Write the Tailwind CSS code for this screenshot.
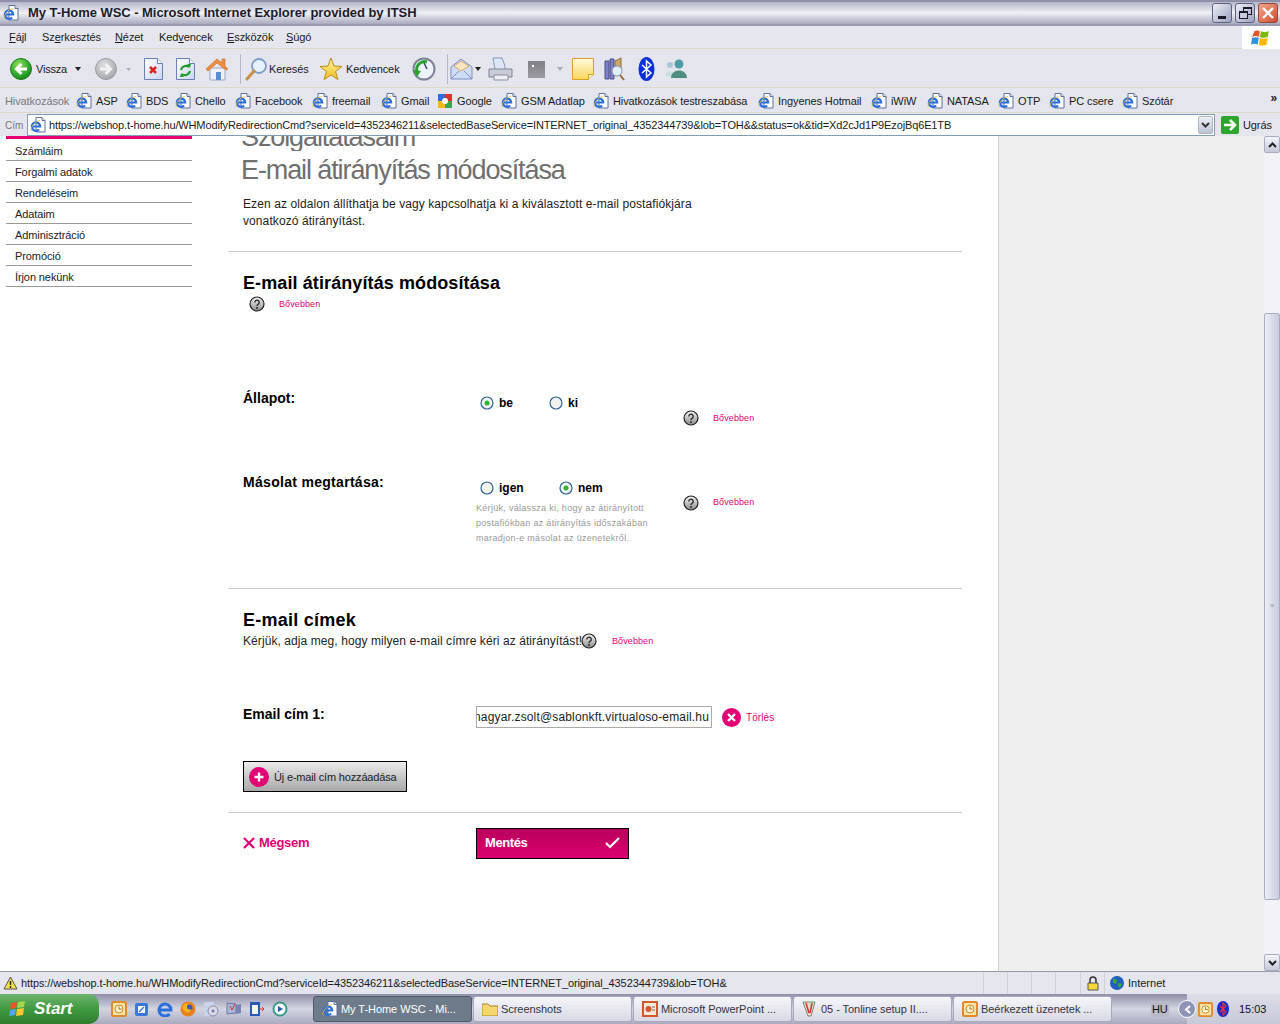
<!DOCTYPE html>
<html lang="hu">
<head>
  <meta charset="UTF-8">
  <title>My T-Home WSC - Microsoft Internet Explorer provided by ITSH</title>
  <script src="https://cdn.jsdelivr.net/npm/@tailwindcss/browser@4"></script>
</head>
<body class="w-[1280px] h-[1024px] overflow-hidden flex flex-col bg-white font-['Liberation_Sans',sans-serif] text-[12px] text-black">
  <svg class="absolute w-0 h-0">
    <defs>
      <linearGradient id="hg" x1="0" y1="0" x2="0" y2="1"><stop offset="0" stop-color="#f6f6f6"/><stop offset="1" stop-color="#8a8a8a"/></linearGradient>
      <radialGradient id="green" cx="0.4" cy="0.3" r="0.8"><stop offset="0" stop-color="#8fe05a"/><stop offset="0.6" stop-color="#2fa82f"/><stop offset="1" stop-color="#177a17"/></radialGradient>
      <radialGradient id="grey" cx="0.4" cy="0.3" r="0.8"><stop offset="0" stop-color="#dcdce0"/><stop offset="1" stop-color="#a2a3a8"/></radialGradient>
      <linearGradient id="star" x1="0" y1="0" x2="0" y2="1"><stop offset="0" stop-color="#fff6a8"/><stop offset="1" stop-color="#f3bd1c"/></linearGradient>
      <linearGradient id="note" x1="0" y1="0" x2="0" y2="1"><stop offset="0" stop-color="#fffbe0"/><stop offset="1" stop-color="#fbd75a"/></linearGradient>
      <linearGradient id="page" x1="0" y1="0" x2="1" y2="1"><stop offset="0" stop-color="#ffffff"/><stop offset="1" stop-color="#c9d6f2"/></linearGradient>
    </defs>
    <symbol id="ie" viewBox="0 0 16 16">
      <path d="M6 .5h6l3 3v11.500H6z" fill="#fff" stroke="#60709a"/>
      <path d="M12 .5v3h3" fill="#dfe6f6" stroke="#60709a"/>
      <path d="M1.800 9.500h8.400a4.200 4.200 0 1 0-1.100 3" fill="none" stroke="#2b6fdc" stroke-width="2.200"/>
      <path d="M1 14C.5 10 5 4 10 3.500" fill="none" stroke="#e8b93a" stroke-width=".8"/>
    </symbol>
    <symbol id="help" viewBox="0 0 16 16">
      <circle cx="8" cy="8" r="7" fill="url(#hg)" stroke="#222" stroke-width="1.200"/>
      <path d="M5.800 6.400a2.200 2.200 0 1 1 3.400 1.800c-.8.500-1.200.9-1.200 1.800" fill="none" stroke="#222" stroke-width="1.300"/>
      <circle cx="8" cy="12" r=".9" fill="#222"/>
    </symbol>
    <symbol id="radio" viewBox="0 0 14 14">
      <circle cx="7" cy="7" r="6" fill="#f2f2ee" stroke="#2f6496" stroke-width="1.200"/>
    </symbol>
    <symbol id="radio-on" viewBox="0 0 14 14">
      <circle cx="7" cy="7" r="6" fill="#f2f2ee" stroke="#2f6496" stroke-width="1.200"/>
      <circle cx="7" cy="7" r="2.500" fill="#2fb52f"/>
    </symbol>
    <symbol id="clock" viewBox="0 0 16 16">
      <rect x="1" y="1" width="14" height="14" rx="1.500" fill="#fbe4a8" stroke="#e08a2a" stroke-width="2"/>
      <circle cx="8" cy="8" r="4" fill="#fdf2d0" stroke="#c98a2a"/>
      <path d="M8 5.500V8h2.500" fill="none" stroke="#a8701e"/>
    </symbol>
  </svg>

  <!-- Title bar -->
  <div class="h-[26px] shrink-0 flex items-center pl-[3px] pr-[2px] border-t-2 border-b-2 border-t-[#8e8fa8] border-b-[#9b9cb4] bg-gradient-to-b from-[#b5b6c9] via-[#f0f0f5] to-[#a9aabf]">
    <svg class="w-[16px] h-[16px]"><use href="#ie"/></svg>
    <span class="ml-[9px] text-[13px] font-bold text-[#1c1c28] tracking-[-0.05px]">My T-Home WSC - Microsoft Internet Explorer provided by ITSH</span>
    <div class="ml-auto flex gap-[3px]">
      <div class="w-[20px] h-[20px] rounded-[3px] border border-[#5d6180] bg-gradient-to-br from-[#eceef6] to-[#9da2bf] flex items-end pl-[5px] pb-[3px]"><div class="w-[8px] h-[3px] bg-[#1c1c28]"></div></div>
      <div class="w-[20px] h-[20px] rounded-[3px] border border-[#5d6180] bg-gradient-to-br from-[#eceef6] to-[#9da2bf] relative">
        <div class="absolute left-[7px] top-[3px] w-[9px] h-[8px] border border-t-2 border-[#1c1c28]"></div>
        <div class="absolute left-[3px] top-[7px] w-[9px] h-[8px] border border-t-2 border-[#1c1c28] bg-[#c9cbdc]"></div>
      </div>
      <div class="w-[20px] h-[20px] rounded-[3px] border border-[#8c4a3a] bg-gradient-to-br from-[#f0a58e] to-[#d2492c] flex items-center justify-center">
        <svg class="w-[14px] h-[14px]" viewBox="0 0 14 14"><path d="M2 2l10 10M12 2L2 12" stroke="#fff" stroke-width="2.400"/></svg>
      </div>
    </div>
  </div>

  <!-- Menu bar -->
  <div class="h-[23px] shrink-0 flex items-center bg-[#e5e6ee] border-b border-b-[#dcd8c8] relative">
    <div class="flex items-center text-[11px] text-[#1a1a1a] tracking-[-0.1px]">
      <span class="ml-[9px] w-[33px]"><u>F</u>ájl</span>
      <span class="w-[58px] whitespace-nowrap">Sz<u>e</u>rkesztés</span>
      <span class="ml-[15px] w-[44px]"><u>N</u>ézet</span>
      <span class="w-[68px]">Ked<u>v</u>encek</span>
      <span class="w-[59px]"><u>E</u>szközök</span>
      <span><u>S</u>úgó</span>
    </div>
    <div class="absolute right-0 top-0 w-[38px] h-[23px] bg-white flex items-center justify-center">
      <svg class="w-[20px] h-[20px]" viewBox="0 0 18 18">
        <path d="M3 3c2-1 3-1 5 0l-1 5c-2-1-4-1-6 0z" fill="#e8562a"/><path d="M9 3c2 1 4 1 7 0l-1 5c-3 1-5 1-7 0z" fill="#7ab800"/>
        <path d="M1 9c2-1 4-1 6 0l-1 6c-2-1-4-1-6 0z" fill="#2f8fe0"/><path d="M8 9c2 1 4 1 7 0l-1 6c-3 1-5 1-7 0z" fill="#f6b900"/>
      </svg>
    </div>
  </div>

  <!-- Standard buttons -->
  <div class="h-[39px] shrink-0 flex items-center pt-[2px] bg-[#e4e5ed] border-b border-b-[#dcd8c8] text-[11px] text-[#1a1a1a]">
    <svg class="ml-[10px] w-[22px] h-[22px]" viewBox="0 0 22 22"><circle cx="11" cy="11" r="10.500" fill="url(#green)" stroke="#1d7d1d"/><path d="M17 11H7M11.500 6l-5 5 5 5" fill="none" stroke="#fff" stroke-width="3"/></svg>
    <span class="ml-[4px] w-[39px] tracking-[-0.2px]">Vissza</span>
    <svg class="w-[6px] h-[4px]" viewBox="0 0 6 4"><path d="M0 0h6L3 4z" fill="#222"/></svg>
    <svg class="ml-[14px] w-[22px] h-[22px]" viewBox="0 0 22 22"><circle cx="11" cy="11" r="10.500" fill="url(#grey)" stroke="#9a9ba0"/><path d="M5 11h10M10.500 6l5 5-5 5" fill="none" stroke="#f2f2f2" stroke-width="3"/></svg>
    <svg class="ml-[9px] w-[5px] h-[3px]" viewBox="0 0 6 4"><path d="M0 0h6L3 4z" fill="#a8a8ae"/></svg>
    <svg class="ml-[13px] w-[19px] h-[22px]" viewBox="0 0 19 22"><path d="M.5.500h13l5 5v16H.500z" fill="url(#page)" stroke="#6d80b5"/><path d="M13.500.5v5h5" fill="#fff" stroke="#6d80b5"/><path d="M6 9l6 6M12 9l-6 6" stroke="#e0261c" stroke-width="2.600"/></svg>
    <svg class="ml-[13px] w-[19px] h-[22px]" viewBox="0 0 19 22"><path d="M.5.500h13l5 5v16H.500z" fill="url(#page)" stroke="#6d80b5"/><path d="M13.500.5v5h5" fill="#fff" stroke="#6d80b5"/><path d="M5 12a5 5 0 0 1 8-3M14 13a5 5 0 0 1-8 3" fill="none" stroke="#1f9c2f" stroke-width="2.200"/><path d="M11 6l4 0-1 4zM8 19l-4 0 1-4z" fill="#1f9c2f"/></svg>
    <svg class="ml-[10px] w-[24px] h-[24px]" viewBox="0 0 24 24"><path d="M5 11h15v12H5z" fill="#eef1f8" stroke="#9aa6c4"/><path d="M1 12L12 2l5 4V2h3v7l3 3-2 1L12 6 3 14z" fill="#ef8f3e" stroke="#d0702a" stroke-width=".7"/><path d="M11 15h5v8h-5z" fill="#5a8ed0"/></svg>
    <div class="ml-[11px] w-[1px] h-[30px] bg-[#b5b7c6]"></div>
    <svg class="ml-[4px] w-[22px] h-[24px]" viewBox="0 0 22 24"><circle cx="14" cy="9" r="7" fill="#e6f2fd" stroke="#7d9cc6" stroke-width="1.800"/><path d="M9 14l-7 8" stroke="#c8924a" stroke-width="3" stroke-linecap="round"/></svg>
    <span class="ml-[2px] w-[50px] tracking-[-0.1px]">Keresés</span>
    <svg class="w-[24px] h-[24px]" viewBox="0 0 24 24"><path d="M12 1l3 8 8 .5-6.500 5 2.500 8L12 18l-7 4.500 2.500-8L1 9.500 9 9z" fill="url(#star)" stroke="#b98d16"/></svg>
    <span class="ml-[3px] w-[66px] tracking-[-0.1px]">Kedvencek</span>
    <svg class="w-[24px] h-[24px]" viewBox="0 0 24 24"><circle cx="12" cy="12" r="10.500" fill="#eef3fa" stroke="#7d8296" stroke-width="2"/><path d="M12 6l3 6" fill="none" stroke="#3a4a6a" stroke-width="1.500"/><path d="M5 15A8 8 0 0 1 15 5" fill="none" stroke="#2ca02c" stroke-width="3"/><path d="M1 13l8 1-4 6z" fill="#2ca02c"/></svg>
    <div class="ml-[11px] w-[1px] h-[30px] bg-[#b5b7c6]"></div>
    <svg class="ml-[2px] w-[23px] h-[24px]" viewBox="0 0 23 24"><path d="M1 10L11 2l11 8v12H1z" fill="#cfdcf6" stroke="#7d8fc4"/><path d="M4 9l7-5 8 5-8 5z" fill="#fbe6c0" stroke="#d8a86a"/><path d="M1 22l8-8M22 22l-8-8" stroke="#7d8fc4"/></svg>
    <svg class="ml-[2px] w-[6px] h-[4px]" viewBox="0 0 6 4"><path d="M0 0h6L3 4z" fill="#222"/></svg>
    <svg class="ml-[7px] w-[25px] h-[24px]" viewBox="0 0 25 24"><path d="M5 1h9l3 8v4H7z" fill="#dbe6f8" stroke="#8a97b8"/><path d="M1 12h23v8H1z" fill="#c9ccd6" stroke="#7d8294"/><path d="M6 18h14v5H6z" fill="#efeff4" stroke="#8a8e9c"/></svg>
    <div class="ml-[15px] w-[17px] h-[17px] bg-gradient-to-b from-[#808086] to-[#9a9aa0] relative"><div class="absolute left-[4px] top-[4px] w-[2px] h-[2px] bg-white"></div></div>
    <svg class="ml-[12px] w-[6px] h-[4px]" viewBox="0 0 6 4"><path d="M0 0h6L3 4z" fill="#a8a8ae"/></svg>
    <svg class="ml-[9px] w-[22px] h-[22px]" viewBox="0 0 22 22"><path d="M.5.500h21v16l-5 5H.500z" fill="url(#note)" stroke="#d6a326"/><path d="M16.500 21.500v-5h5" fill="#fff3c0" stroke="#d6a326"/></svg>
    <svg class="ml-[10px] w-[21px] h-[24px]" viewBox="0 0 21 24"><path d="M1 4h4v18H1zM6 2h4v20H6z" fill="#7d80c4" stroke="#4d5090"/><path d="M11 4l6-3v12h-6z" fill="#c8a868" stroke="#8a7040"/><circle cx="13" cy="14" r="5" fill="#dff0fa" stroke="#8a9ab0"/><path d="M16 18l4 5" stroke="#a06b2d" stroke-width="2"/></svg>
    <svg class="ml-[13px] w-[17px] h-[24px]" viewBox="0 0 17 24"><ellipse cx="8.500" cy="12" rx="8" ry="12" fill="#0a2fd8"/><path d="M4 8l9 8-4.500 4V4l4.500 4-9 8" fill="none" stroke="#fff" stroke-width="1.500"/></svg>
    <svg class="ml-[6px] w-[30px] h-[22px]" viewBox="0 0 30 22"><circle cx="9" cy="7" r="3" fill="#a8c8d8"/><path d="M4 18c0-6 10-6 10 0z" fill="#c8dce4"/><circle cx="18" cy="6" r="4.500" fill="#4f9aa8"/><path d="M10 20c0-10 16-10 16 0z" fill="#4f8f80"/></svg>
  </div>

  <!-- Links bar -->
  <div class="h-[25px] shrink-0 flex items-center pt-[2px] bg-[#e4e5ed] border-b border-b-[#dcd8c8] text-[11px] text-[#1a1a1a] tracking-[-0.1px] relative">
    <span class="ml-[5px] w-[71px] text-[#77787f]">Hivatkozások</span>
    <a class="w-[50px] flex items-center gap-[4px]"><svg class="w-[16px] h-[16px]"><use href="#ie"/></svg>ASP</a>
    <a class="w-[49px] flex items-center gap-[4px]"><svg class="w-[16px] h-[16px]"><use href="#ie"/></svg>BDS</a>
    <a class="w-[60px] flex items-center gap-[4px]"><svg class="w-[16px] h-[16px]"><use href="#ie"/></svg>Chello</a>
    <a class="w-[77px] flex items-center gap-[4px]"><svg class="w-[16px] h-[16px]"><use href="#ie"/></svg>Facebook</a>
    <a class="w-[69px] flex items-center gap-[4px]"><svg class="w-[16px] h-[16px]"><use href="#ie"/></svg>freemail</a>
    <a class="w-[56px] flex items-center gap-[4px]"><svg class="w-[16px] h-[16px]"><use href="#ie"/></svg>Gmail</a>
    <a class="w-[64px] flex items-center gap-[4px]"><svg class="w-[16px] h-[16px]" viewBox="0 0 16 16"><path d="M1 1h7v7H1z" fill="#2f6fd8"/><path d="M8 1h7v7H8z" fill="#d8342c"/><path d="M1 8h7v7H1z" fill="#f4b81c"/><path d="M8 8h7v7H8z" fill="#3aa84a"/><circle cx="8" cy="8" r="3" fill="#fff"/></svg>Google</a>
    <a class="w-[92px] flex items-center gap-[4px] whitespace-nowrap"><svg class="w-[16px] h-[16px]"><use href="#ie"/></svg>GSM Adatlap</a>
    <a class="w-[165px] flex items-center gap-[4px] whitespace-nowrap"><svg class="w-[16px] h-[16px]"><use href="#ie"/></svg>Hivatkozások testreszabása</a>
    <a class="w-[113px] flex items-center gap-[4px] whitespace-nowrap"><svg class="w-[16px] h-[16px]"><use href="#ie"/></svg>Ingyenes Hotmail</a>
    <a class="w-[56px] flex items-center gap-[4px]"><svg class="w-[16px] h-[16px]"><use href="#ie"/></svg>iWiW</a>
    <a class="w-[71px] flex items-center gap-[4px]"><svg class="w-[16px] h-[16px]"><use href="#ie"/></svg>NATASA</a>
    <a class="w-[51px] flex items-center gap-[4px]"><svg class="w-[16px] h-[16px]"><use href="#ie"/></svg>OTP</a>
    <a class="w-[73px] flex items-center gap-[4px] whitespace-nowrap"><svg class="w-[16px] h-[16px]"><use href="#ie"/></svg>PC csere</a>
    <a class="flex items-center gap-[4px]"><svg class="w-[16px] h-[16px]"><use href="#ie"/></svg>Szótár</a>
    <span class="ml-auto mr-[3px] -mt-[6px] font-bold text-[12px]">»</span>
  </div>

  <!-- Address bar -->
  <div class="h-[23px] shrink-0 flex items-center bg-[#e4e5ed] text-[11px] text-[#1a1a1a] relative">
    <span class="ml-[5px] w-[22px] pt-[2px] text-[10px] text-[#77787f]">Cím</span>
    <div class="w-[1188px] h-[22px] border border-[#7f9db9] bg-white flex items-center relative">
      <svg class="ml-[2px] w-[16px] h-[16px] shrink-0"><use href="#ie"/></svg>
      <span class="ml-[3px] pt-[2px] whitespace-nowrap tracking-[-0.13px]">https://webshop.t-home.hu/WHModifyRedirectionCmd?serviceId=4352346211&amp;selectedBaseService=INTERNET_original_4352344739&amp;lob=TOH&amp;&amp;status=ok&amp;tid=Xd2cJd1P9EzojBq6E1TB</span>
      <div class="absolute right-[1px] top-[1px] w-[15px] h-[18px] bg-gradient-to-b from-[#eef0f6] to-[#bcc2d6] border border-[#b0b6ca] rounded-[2px] flex items-center justify-center">
        <svg class="w-[9px] h-[6px]" viewBox="0 0 9 6"><path d="M1 1l3.500 3.500L8 1" fill="none" stroke="#333" stroke-width="2"/></svg>
      </div>
    </div>
    <svg class="ml-[6px] w-[18px] h-[18px]" viewBox="0 0 18 18"><rect width="18" height="18" rx="2" fill="#2da52d"/><path d="M3 9h10M9 4l5 5-5 5" fill="none" stroke="#fff" stroke-width="2.600"/></svg>
    <span class="ml-[4px] pt-[2px] tracking-[-0.1px]">Ugrás</span>
  </div>

  <!-- Page viewport -->
  <div class="flex-1 min-h-0 flex">
    <div class="w-[999px] shrink-0 flex overflow-hidden border-r border-r-[#d0d0d0] bg-white">
      <!-- Left menu -->
      <nav class="w-[186px] ml-[6px] shrink-0 text-[11px] text-[#222] tracking-[-0.1px]">
        <div class="h-[3px] bg-[#e20074]"></div>
        <div class="h-[22px] pt-[3px] pl-[9px] border-b border-b-[#999] flex items-center">Számláim</div>
        <div class="h-[21px] pt-[2px] pl-[9px] border-b border-b-[#999] flex items-center">Forgalmi adatok</div>
        <div class="h-[21px] pt-[2px] pl-[9px] border-b border-b-[#999] flex items-center">Rendeléseim</div>
        <div class="h-[21px] pt-[2px] pl-[9px] border-b border-b-[#999] flex items-center">Adataim</div>
        <div class="h-[21px] pt-[2px] pl-[9px] border-b border-b-[#999] flex items-center">Adminisztráció</div>
        <div class="h-[21px] pt-[2px] pl-[9px] border-b border-b-[#999] flex items-center">Promóció</div>
        <div class="h-[21px] pt-[2px] pl-[9px] border-b border-b-[#999] flex items-center">Írjon nekünk</div>
      </nav>

      <!-- Main column -->
      <main class="w-[734px] ml-[36px] shrink-0 text-[12px]">
        <div class="h-[116px] pl-[13px] border-b border-b-[#ccc]">
          <div class="h-[15px] overflow-hidden flex items-end text-[27px] leading-[30px] text-[#6f6f6f] tracking-[-1.1px] whitespace-nowrap"><span class="mb-[-1px]">Szolgáltatásaim</span></div>
          <h1 class="mt-[3px] text-[27px] leading-[32px] text-[#6f6f6f] tracking-[-1.1px] whitespace-nowrap">E-mail átirányítás módosítása</h1>
          <p class="mt-[10px] pl-[2px] w-[470px] leading-[17px] text-[#222] tracking-[0.09px]">Ezen az oldalon állíthatja be vagy kapcsolhatja ki a kiválasztott e-mail postafiókjára vonatkozó átirányítást.</p>
        </div>

        <div class="h-[337px] pl-[15px] border-b border-b-[#ccc]">
          <h2 class="pt-[20px] text-[18px] leading-[22px] font-bold tracking-[0.1px]">E-mail átirányítás módosítása</h2>
          <div class="mt-[2px] ml-[6px] flex items-center">
            <svg class="w-[16px] h-[16px]"><use href="#help"/></svg>
            <a class="ml-[14px] pt-[2px] text-[9px] text-[#e20074] tracking-[0.1px]">Bővebben</a>
          </div>

          <div class="mt-[78px] grid grid-cols-[233px_207px_1fr] h-[84px]">
            <div class="text-[14px] font-bold leading-[16px]">Állapot:</div>
            <div class="flex pl-[4px] h-[16px] mt-[5px] items-center font-bold">
              <svg class="w-[14px] h-[14px]"><use href="#radio-on"/></svg><span class="ml-[5px] w-[50px]">be</span>
              <svg class="w-[14px] h-[14px]"><use href="#radio"/></svg><span class="ml-[5px]">ki</span>
            </div>
            <div class="flex items-start pt-[20px]">
              <svg class="w-[16px] h-[16px]"><use href="#help"/></svg>
              <a class="ml-[14px] pt-[2px] text-[9px] text-[#e20074] leading-[13px] tracking-[0.1px]">Bővebben</a>
            </div>
          </div>

          <div class="grid grid-cols-[233px_207px_1fr]">
            <div class="text-[14px] font-bold leading-[16px] tracking-[0.3px] whitespace-nowrap">Másolat megtartása:</div>
            <div>
              <div class="flex pl-[4px] h-[16px] mt-[6px] items-center font-bold">
                <svg class="w-[14px] h-[14px]"><use href="#radio"/></svg><span class="ml-[5px] w-[60px]">igen</span>
                <svg class="w-[14px] h-[14px]"><use href="#radio-on"/></svg><span class="ml-[5px]">nem</span>
              </div>
              <p class="mt-[5px] text-[9px] leading-[15px] text-[#999] tracking-[0.3px]">Kérjük, válassza ki, hogy az átirányított postafiókban az átirányítás időszakában maradjon-e másolat az üzenetekről.</p>
            </div>
            <div class="flex items-start pt-[21px]">
              <svg class="w-[16px] h-[16px]"><use href="#help"/></svg>
              <a class="ml-[14px] pt-[1px] text-[9px] text-[#e20074] leading-[13px] tracking-[0.1px]">Bővebben</a>
            </div>
          </div>
        </div>

        <div class="h-[224px] pl-[15px] border-b border-b-[#ccc]">
          <h2 class="pt-[20px] text-[18px] leading-[22px] font-bold tracking-[0.25px]">E-mail címek</h2>
          <div class="mt-[1px] flex items-center h-[18px] text-[#222]">
            <span class="w-[338px] whitespace-nowrap tracking-[0.08px]">Kérjük, adja meg, hogy milyen e-mail címre kéri az átirányítást!</span>
            <svg class="w-[16px] h-[16px]"><use href="#help"/></svg>
            <a class="ml-[15px] pt-[1px] text-[9px] text-[#e20074] tracking-[0.1px]">Bővebben</a>
          </div>
          <div class="mt-[56px] grid grid-cols-[233px_1fr] h-[22px]">
            <div class="text-[14px] font-bold leading-[16px]">Email cím 1:</div>
            <div class="flex items-center">
              <div class="w-[236px] h-[22px] border border-[#aaa] overflow-hidden flex items-center justify-end pr-[2px] whitespace-nowrap text-[#222] tracking-[0.16px]"><span class="shrink-0">nagyar.zsolt@sablonkft.virtualoso-email.hu</span></div>
              <svg class="ml-[10px] w-[19px] h-[19px]" viewBox="0 0 19 19"><circle cx="9.500" cy="9.500" r="9.500" fill="#e20074"/><path d="M6 6l7 7M13 6l-7 7" stroke="#fff" stroke-width="2.400"/></svg>
              <a class="ml-[5px] text-[10px] text-[#e20074] tracking-[0.1px]">Törlés</a>
            </div>
          </div>
          <div class="mt-[33px] w-[164px] h-[31px] border border-black bg-gradient-to-b from-[#ececec] to-[#a8a8a8] flex items-center pl-[5px] text-[11px] text-[#222]">
            <svg class="w-[20px] h-[20px]" viewBox="0 0 20 20"><circle cx="10" cy="10" r="10" fill="#e20074"/><path d="M10 5.500v9M5.500 10h9" stroke="#fff" stroke-width="2.400"/></svg>
            <span class="ml-[5px] pt-[1px] whitespace-nowrap tracking-[-0.17px]">Új e-mail cím hozzáadása</span>
          </div>
        </div>

        <div class="pt-[15px] pl-[15px] grid grid-cols-[233px_1fr]">
          <a class="flex items-center h-[29px] text-[13px] font-bold text-[#e20074] tracking-[-0.3px]">
            <svg class="w-[12px] h-[12px]" viewBox="0 0 12 12"><path d="M1 1l10 10M11 1L1 11" stroke="#e20074" stroke-width="2.200"/></svg>
            <span class="ml-[4px]">Mégsem</span>
          </a>
          <div class="w-[153px] h-[31px] border border-black bg-gradient-to-b from-[#b8005c] to-[#dc006e] flex items-center pl-[8px] pr-[8px] pb-[1px] text-[13px] font-bold text-white">
            <span class="tracking-[-0.4px]">Mentés</span>
            <svg class="ml-auto w-[15px] h-[12px]" viewBox="0 0 15 12"><path d="M1 6l4 4 9-9" fill="none" stroke="#fff" stroke-width="2.200"/></svg>
          </div>
        </div>
      </main>
    </div>

    <!-- Grey right column -->
    <div class="flex-1 bg-[#efefef]"></div>

    <!-- Scrollbar -->
    <div class="w-[16px] shrink-0 flex flex-col bg-[#f3f3f7]">
      <div class="h-[17px] rounded-[2px] border border-[#a8adc4] bg-gradient-to-b from-[#f4f5fa] to-[#c4c8da] flex items-center justify-center">
        <svg class="w-[9px] h-[6px]" viewBox="0 0 9 6"><path d="M1 5l3.500-3.500L8 5" fill="none" stroke="#222" stroke-width="2"/></svg>
      </div>
      <div class="mt-[160px] h-[587px] rounded-[2px] border border-[#a8adc4] bg-gradient-to-r from-[#eceef5] to-[#c8ccdc] flex items-center justify-center text-[7px] text-[#888]">≡</div>
      <div class="mt-auto h-[17px] rounded-[2px] border border-[#a8adc4] bg-gradient-to-b from-[#f4f5fa] to-[#c4c8da] flex items-center justify-center">
        <svg class="w-[9px] h-[6px]" viewBox="0 0 9 6"><path d="M1 1l3.500 3.500L8 1" fill="none" stroke="#222" stroke-width="2"/></svg>
      </div>
    </div>
  </div>

  <!-- Status bar -->
  <div class="h-[23px] shrink-0 flex items-center bg-[#e4e5ed] border-t border-t-[#9a9aa8] text-[11px] text-[#1a1a1a]">
    <svg class="ml-[3px] w-[15px] h-[15px]" viewBox="0 0 15 15"><path d="M1 13L7.500 1 14 13z" fill="#f8e04a" stroke="#555"/><path d="M7.500 5v4M7.500 10v2" stroke="#222" stroke-width="1.500"/></svg>
    <span class="ml-[3px] w-[962px] whitespace-nowrap tracking-[-0.1px]">https://webshop.t-home.hu/WHModifyRedirectionCmd?serviceId=4352346211&amp;selectedBaseService=INTERNET_original_4352344739&amp;lob=TOH&amp;</span>
    <div class="w-[1px] h-[22px] bg-[#d0d0d8]"></div>
    <div class="ml-[23px] w-[1px] h-[22px] bg-[#d0d0d8]"></div>
    <div class="ml-[23px] w-[1px] h-[22px] bg-[#d0d0d8]"></div>
    <div class="ml-[23px] w-[1px] h-[22px] bg-[#d0d0d8]"></div>
    <div class="ml-[24px] w-[1px] h-[22px] bg-[#d0d0d8]"></div>
    <svg class="ml-[6px] w-[12px] h-[15px]" viewBox="0 0 11 15"><path d="M2.500 7V4a3 3 0 0 1 6 0v3" fill="none" stroke="#333" stroke-width="1.500"/><path d="M.5 7h10v7H.500z" fill="#f4d83a" stroke="#555"/></svg>
    <div class="ml-[5px] w-[1px] h-[22px] bg-[#d0d0d8]"></div>
    <svg class="ml-[5px] w-[14px] h-[14px]" viewBox="0 0 14 14"><circle cx="7" cy="7" r="7" fill="#1f5fbf"/><path d="M3 2l4 2-1 4-3-1zM8 7l4 1-2 4-2-2z" fill="#3ca83c"/></svg>
    <span class="ml-[4px]">Internet</span>
  </div>

  <!-- Taskbar -->
  <div class="h-[30px] shrink-0 flex items-center bg-gradient-to-b from-[#8f90a8] via-[#d4d5e2] to-[#a9aabf] text-[11px] text-[#33343f] tracking-[-0.05px] relative">
    <div class="w-[99px] h-[30px] rounded-r-[10px] bg-gradient-to-b from-[#6fb36f] via-[#3f9a3f] to-[#2f7d2f] flex items-center pl-[9px] shrink-0">
      <svg class="w-[18px] h-[18px]" viewBox="0 0 18 18"><path d="M2 3l6-1-1 6-6 1z" fill="#e8562a"/><path d="M9 2l7-1-1 6-7 1z" fill="#a4d84a"/><path d="M1 10l6-1-1 6-6 1z" fill="#4fa8ee"/><path d="M8 9l7-1-1 7-7 1z" fill="#f6c930"/></svg>
      <span class="ml-[7px] text-[17px] font-bold italic text-white">Start</span>
    </div>
    <div class="flex items-center gap-[7px] ml-[12px] w-[202px] shrink-0">
      <svg class="w-[16px] h-[16px]"><use href="#clock"/></svg>
      <svg class="w-[16px] h-[16px]" viewBox="0 0 16 16"><rect x="1" y="2" width="13" height="13" rx="2" fill="#3a78dc"/><path d="M4 5h7v7H4z" fill="#fff"/><path d="M5 11l5-5" stroke="#3a78dc" stroke-width="1.500"/></svg>
      <svg class="w-[16px] h-[16px]" viewBox="0 0 16 16"><path d="M2 9h12a6 6 0 1 0-1.500 4" fill="none" stroke="#2b6fdc" stroke-width="3"/></svg>
      <svg class="w-[16px] h-[16px]" viewBox="0 0 16 16"><circle cx="8" cy="8" r="7.500" fill="#e8801c"/><circle cx="9" cy="7" r="3.500" fill="#3a5aa8"/><path d="M2 6c2-4 6-4 8-3-3 0-3 2-3 3 0 3 4 3 5 2-1 4-7 6-10-2z" fill="#f8b21c"/></svg>
      <svg class="w-[16px] h-[16px]" viewBox="0 0 16 16"><rect x="1" y="1" width="10" height="14" rx="1" fill="#c8d4ea"/><circle cx="10" cy="10" r="5" fill="#dcdce8" stroke="#8a8aa8"/><circle cx="10" cy="10" r="1.500" fill="#6a78b8"/></svg>
      <svg class="w-[16px] h-[16px]" viewBox="0 0 16 16"><path d="M1 2l9 1v9l-9 1z" fill="#a8b4d8" stroke="#6d78a0"/><path d="M10 4l5-1v9l-5 1z" fill="#7684b4"/><path d="M4 5l2 4 3-6" fill="none" stroke="#d8342c"/></svg>
      <svg class="w-[16px] h-[16px]" viewBox="0 0 16 16"><path d="M1 1h10v14H1z" fill="#2a5ab0"/><path d="M3 4h6v9H3z" fill="#f4f4e8"/><path d="M10 8h5M13 6l2 2-2 2" stroke="#d8342c" fill="none"/></svg>
      <svg class="w-[16px] h-[16px]" viewBox="0 0 16 16"><circle cx="8" cy="8" r="6.500" fill="#fff" stroke="#3a9a8a" stroke-width="2"/><path d="M6 5l5 3-5 3z" fill="#2a5ab0"/></svg>
    </div>
    <div class="w-[159px] h-[26px] shrink-0 rounded-[3px] bg-[#6d7b8a] border border-[#525c68] text-white flex items-center pl-[8px]">
      <svg class="w-[16px] h-[16px] shrink-0"><use href="#ie"/></svg>
      <span class="ml-[3px]">My T-Home WSC - Mi...</span>
    </div>
    <div class="ml-[1px] w-[159px] h-[26px] shrink-0 rounded-[3px] bg-gradient-to-b from-[#f6f6fa] to-[#d8d9e4] border border-[#a8a9bc] flex items-center pl-[8px]">
      <svg class="w-[16px] h-[14px]" viewBox="0 0 16 14"><path d="M0 2h6l2 2h8v10H0z" fill="#f5d76e" stroke="#a88820"/></svg>
      <span class="ml-[3px]">Screenshots</span>
    </div>
    <div class="ml-[1px] w-[159px] h-[26px] shrink-0 rounded-[3px] bg-gradient-to-b from-[#f6f6fa] to-[#d8d9e4] border border-[#a8a9bc] flex items-center pl-[8px]">
      <svg class="w-[16px] h-[16px]" viewBox="0 0 16 16"><rect x="1" y="1" width="14" height="14" fill="#f8e8d8" stroke="#d2572a" stroke-width="2"/><circle cx="6.500" cy="8" r="3" fill="#d2572a"/><path d="M10 6h3M10 9h3" stroke="#7a6a5a"/></svg>
      <span class="ml-[3px] whitespace-nowrap">Microsoft PowerPoint ...</span>
    </div>
    <div class="ml-[1px] w-[159px] h-[26px] shrink-0 rounded-[3px] bg-gradient-to-b from-[#f6f6fa] to-[#d8d9e4] border border-[#a8a9bc] flex items-center pl-[8px]">
      <svg class="w-[14px] h-[16px]" viewBox="0 0 14 16"><path d="M1 1l5 14h3l4-14z" fill="#d8e4d0" stroke="#7a8a6a"/><path d="M4 2l3 10M10 2L8 12" stroke="#d8342c" stroke-width="1.500"/></svg>
      <span class="ml-[5px] whitespace-nowrap">05 - Tonline setup II....</span>
    </div>
    <div class="ml-[1px] w-[159px] h-[26px] shrink-0 rounded-[3px] bg-gradient-to-b from-[#f6f6fa] to-[#d8d9e4] border border-[#a8a9bc] flex items-center pl-[8px]">
      <svg class="w-[16px] h-[16px]"><use href="#clock"/></svg>
      <span class="ml-[3px] whitespace-nowrap">Beérkezett üzenetek ...</span>
    </div>
    <span class="ml-[39px] px-[1px] bg-[#b8b9ca] text-[#111] tracking-[-0.2px]">HU</span>
    <div class="ml-auto w-[93px] h-[30px] shrink-0 flex items-center bg-gradient-to-b from-[#dcdde8] to-[#c8c9d8]">
      <div class="-ml-[9px] w-[18px] h-[18px] rounded-full bg-[#8f93b5] border border-white flex items-center justify-center">
        <svg class="w-[7px] h-[9px]" viewBox="0 0 7 9"><path d="M6 1L2 4.500 6 8" fill="none" stroke="#fff" stroke-width="2"/></svg>
      </div>
      <svg class="ml-[2px] w-[15px] h-[15px]"><use href="#clock"/></svg>
      <svg class="ml-[4px] w-[12px] h-[16px]" viewBox="0 0 12 16"><ellipse cx="6" cy="8" rx="6" ry="8" fill="#0a2fd8"/><path d="M3 5l6 6-3 3V2l3 3-6 6" fill="none" stroke="#e83030" stroke-width="1.200"/></svg>
      <span class="ml-[10px] text-[#111]">15:03</span>
    </div>
  </div>
</body>
</html>
